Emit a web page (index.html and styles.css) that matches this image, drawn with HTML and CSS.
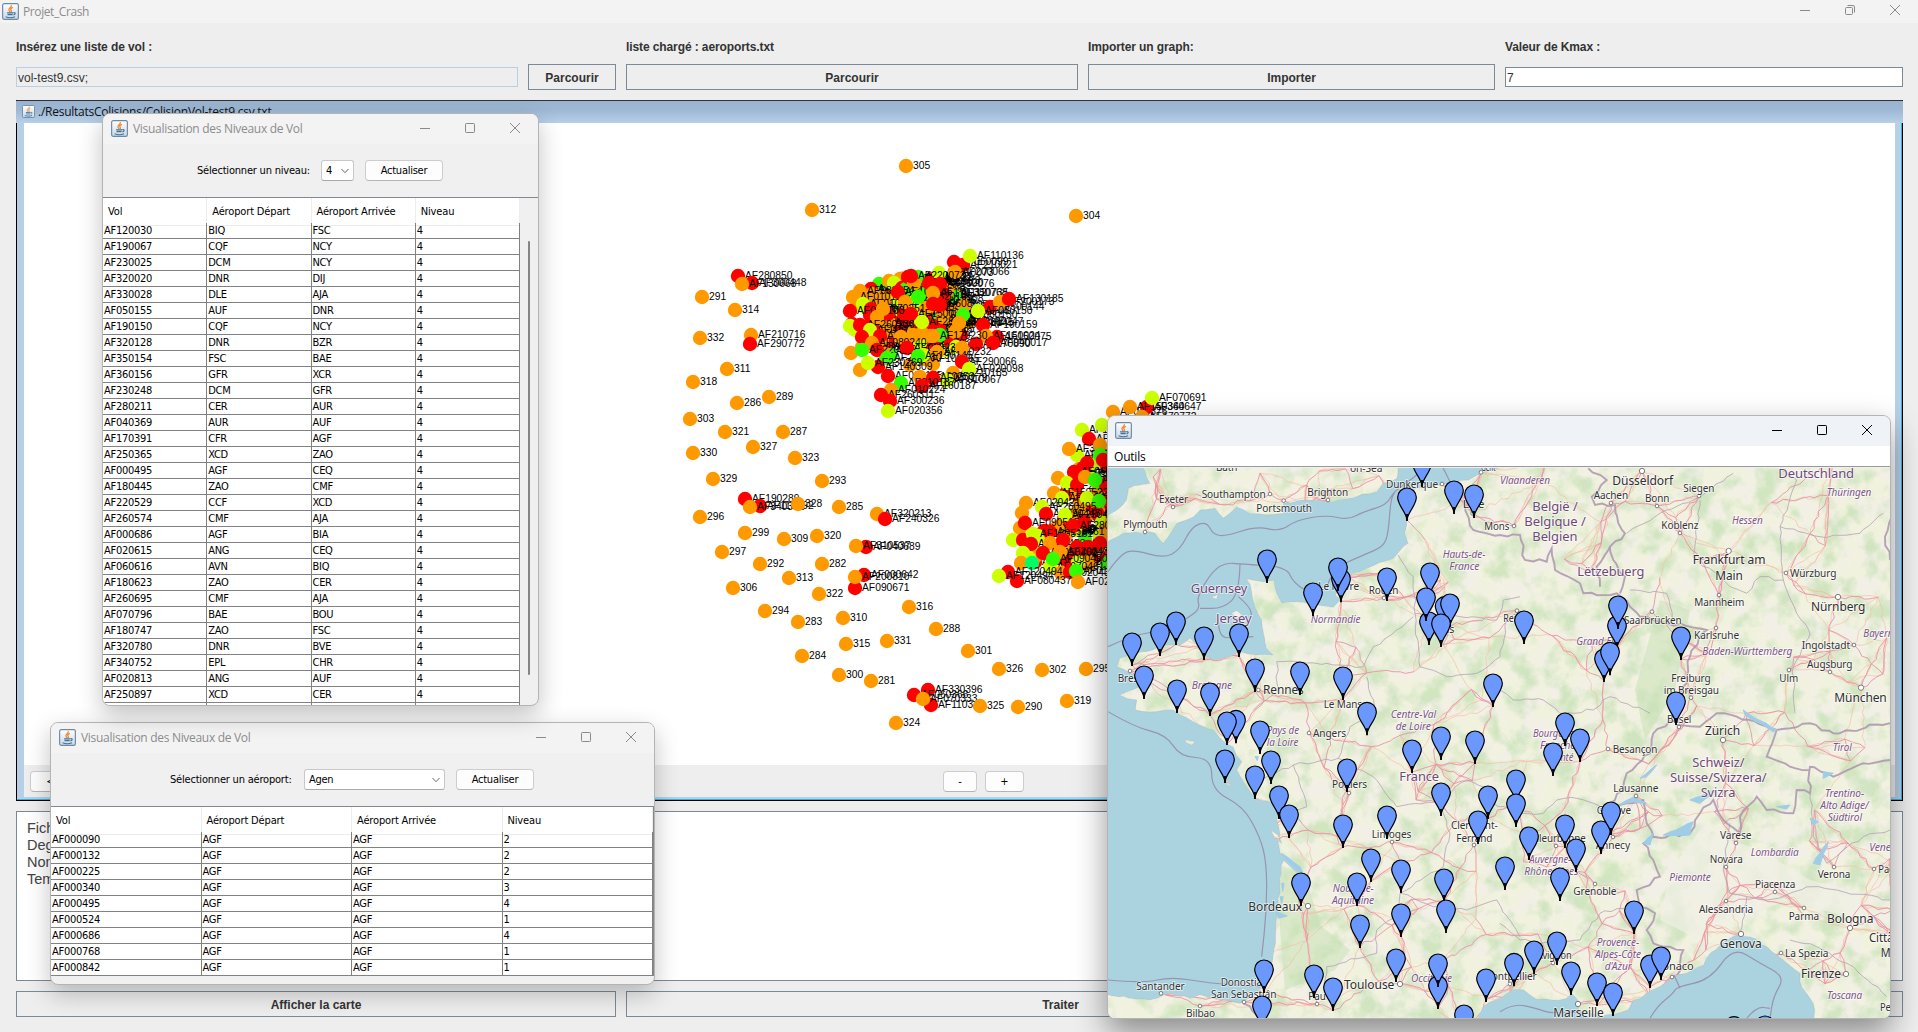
FILE: index.html
```html
<!DOCTYPE html>
<html lang="fr">
<head>
<meta charset="utf-8">
<title>Projet_Crash</title>
<link rel="stylesheet" href="styles.css">
</head>
<body>
<svg class="defs" width="0" height="0" aria-hidden="true">
  <defs>
    <linearGradient id="tile" x1="0" y1="0" x2="0" y2="1"><stop offset="0" stop-color="#fff"/><stop offset="1" stop-color="#c9d8e6"/></linearGradient>
    <symbol id="java" viewBox="0 0 16 16">
      <rect x=".6" y=".6" width="14.8" height="14.8" rx="1.5" fill="url(#tile)" stroke="#6d8aa3" stroke-width="1.1"/>
      <path d="M8.8 2C9.4 4.200 5.800 4.700 6.600 6.700 6.900 7.500 7.500 8 7.500 8.600M10.300 4.200C8.300 5 7.600 5.800 8.700 7 9.100 7.600 8.900 8.100 8.500 8.500" fill="none" stroke="#ee8a2e" stroke-width="1.200"/>
      <path d="M4.800 9.300H10.500M5.200 11H10M3.400 13C6 14 10 13.900 12.300 12.900M10.800 9C13 8.800 12.800 10.600 10.800 11.200" fill="none" stroke="#42719c" stroke-width="1.100"/>
    </symbol>
    <symbol id="min" viewBox="0 0 12 12"><path d="M1 6.500H11" fill="none" stroke="currentColor"/></symbol>
    <symbol id="max" viewBox="0 0 12 12"><rect x="1.500" y="1.500" width="9" height="9" rx=".8" fill="none" stroke="currentColor"/></symbol>
    <symbol id="restore" viewBox="0 0 12 12"><path d="M3.500 1.500H9A1.500 1.500 0 0 1 10.500 3V8.500" fill="none" stroke="currentColor"/><rect x="1.500" y="3.500" width="7" height="7" rx="1" fill="none" stroke="currentColor"/></symbol>
    <symbol id="close" viewBox="0 0 12 12"><path d="M1 1L11 11M11 1L1 11" fill="none" stroke="currentColor"/></symbol>
    <symbol id="chev" viewBox="0 0 10 8"><path d="M1.500 2L5 5.700 8.500 2" fill="none" stroke="#666"/></symbol>
  </defs>
</svg>

<div class="app">
  <header class="app-title">
    <svg class="java"><use href="#java"/></svg><span class="caption">Projet_Crash</span>
    <span class="controls"><svg><use href="#min"/></svg><svg><use href="#restore"/></svg><svg><use href="#close"/></svg></span>
  </header>
  <main class="content">
    <div class="form">
      <label class="wide">Insérez une liste de vol :</label>
      <label>liste chargé : aeroports.txt</label>
      <label>Importer un graph:</label>
      <label>Valeur de Kmax :</label>
      <div class="field readonly">vol-test9.csv;</div>
      <button class="metal">Parcourir</button>
      <button class="metal">Parcourir</button>
      <button class="metal">Importer</button>
      <div class="field">7</div>
    </div>
    <section class="frame">
      <div class="frame-title"><svg class="java"><use href="#java"/></svg>./ResultatsColisions/ColisionVol-test9.csv.txt</div>
      <div class="frame-body">
        <svg class="graph" id="graph" viewBox="24 123 1871 642"></svg>
        <div class="toolbar">
          <button class="win-btn nav">&lt;</button>
          <span class="zoom"><button class="win-btn minus">-</button><button class="win-btn plus">+</button></span>
        </div>
      </div>
    </section>
    <section class="log">
      <p>Fichier</p><p>Degre</p><p>Nombre</p><p>Temps</p>
    </section>
    <div class="actions">
      <button class="metal">Afficher la carte</button>
      <button class="metal">Traiter</button>
      <button class="metal"></button>
    </div>
  </main>
</div>

<div class="window airport">
  <header class="titlebar"><svg class="java"><use href="#java"/></svg><span class="caption">Visualisation des Niveaux de Vol</span>
    <span class="controls"><svg><use href="#min"/></svg><svg><use href="#max"/></svg><svg><use href="#close"/></svg></span></header>
  <div class="picker"><span>Sélectionner un aéroport:</span><div class="select">Agen<svg><use href="#chev"/></svg></div><button class="win-btn">Actualiser</button></div>
  <div class="table" id="airports"></div>
</div>

<div class="window level">
  <header class="titlebar"><svg class="java"><use href="#java"/></svg><span class="caption">Visualisation des Niveaux de Vol</span>
    <span class="controls"><svg><use href="#min"/></svg><svg><use href="#max"/></svg><svg><use href="#close"/></svg></span></header>
  <div class="picker"><span>Sélectionner un niveau:</span><div class="select">4<svg><use href="#chev"/></svg></div><button class="win-btn">Actualiser</button></div>
  <div class="scroll"><div class="table" id="levels"></div><div class="track"><div class="thumb"></div></div></div>
</div>

<div class="window map-window">
  <header class="titlebar"><svg class="java"><use href="#java"/></svg>
    <span class="controls"><svg><use href="#min"/></svg><svg><use href="#max"/></svg><svg><use href="#close"/></svg></span></header>
  <nav class="menu">Outils</nav>
  <svg class="map" id="map" viewBox="1108 468 782 550"></svg>
</div>
<script src="app.js"></script>
</body>
</html>
```
FILE: styles.css
```css
* { box-sizing: border-box; }
body { margin: 0; width: 1918px; height: 1032px; overflow: hidden; position: relative; font-family: "Liberation Sans", Arial, sans-serif; background: #eee; }
button { font: inherit; color: inherit; padding: 0; margin: 0; }
.defs { position: absolute; }
.java { width: 17px; height: 17px; flex: none; }
.caption { font: 12px "Open Sans", "Noto Sans", sans-serif; letter-spacing: -.3px; color: #8c8c8c; white-space: nowrap; }
.controls { margin-left: auto; display: flex; gap: 33px; color: #8a8a8a; }
.controls svg { width: 12px; height: 12px; display: block; }

.app { height: 1032px; display: flex; flex-direction: column; }
.app-title { height: 23px; background: #f3f3f3; display: flex; align-items: center; gap: 4px; padding: 0 17px 0 2px; }
.app-title .caption { letter-spacing: -.4px; }
.app-title .controls { margin-top: -3px; }
.content { flex: 1; padding: 0 15px 0 16px; display: flex; flex-direction: column; }
.form { display: grid; grid-template-columns: 502px 88px 452px 407px 398px; column-gap: 10px; grid-template-rows: 41px 26px; align-items: center; font-size: 12px; font-weight: bold; color: #333; margin-bottom: 10px; }
.form label { padding-bottom: 1px; margin-top: 7px; letter-spacing: -.1px; }
.form .wide { grid-column: span 2; }
.field { height: 20px; background: #fff; border: 1px solid #7a8a99; font-weight: normal; line-height: 20px; padding-left: 1px; color: #333; }
.readonly { background: #eee; border-color: #b8cfe5; }
.metal { border: 1px solid #7a8a99; background: #eee; font-size: 12px; font-weight: bold; color: #333; height: 26px; padding-top: 1px; }

.frame { height: 701px; border: solid #000; border-width: 1px; border-top-color: #333; display: flex; flex-direction: column; }
.frame-title { height: 22px; margin: 0 -1px; background: linear-gradient(#99b3d0, #9db8d4 40%, #b8cfe8); font: 12px "Open Sans", "Noto Sans", sans-serif; letter-spacing: -.25px; display: flex; align-items: center; gap: 3px; padding: 0 0 2px 6px; color: #111; }
.frame-title .java { width: 13px; height: 13px; }
.frame-body { flex: 1; border: solid #b8cfe8; border-width: 0 6px 2px 7px; box-shadow: 0 0 0 1px #2cb5df; clip-path: inset(0 -1px -1px 0); background: #fff; display: flex; flex-direction: column; margin: 0 1px 1px 0; }
.graph { width: 1871px; height: 642px; display: block; }
.toolbar { flex: 1; background: #eee; display: flex; align-items: center; padding-left: 6px; font: 11px "DejaVu Sans Condensed", "DejaVu Sans", sans-serif; }
.nav { width: 41px; }
.zoom { margin-left: 872px; display: flex; gap: 8px; }
.minus { width: 34px; } .plus { width: 39px; }
.log { height: 170px; margin-top: 10px; border: 1px solid #7a8a99; background: #fff; padding: 8px 10px; font-size: 14.500px; line-height: 17px; color: #444; }
.log p { margin: 0; }
.actions { display: grid; grid-template-columns: 600px 869px 398px; gap: 10px; margin-top: 10px; }

.window { position: absolute; border: 1px solid #b4b4b4; border-radius: 8px; background: #f0f0f0; overflow: hidden; display: flex; flex-direction: column; font: 11px "DejaVu Sans Condensed", "DejaVu Sans", sans-serif; letter-spacing: -.28px; color: #000; box-shadow: 0 9px 24px rgba(0,0,0,.24); }
.titlebar { height: 30px; flex: none; background: #f3f3f3; display: flex; align-items: center; padding: 0 17px 2px 8px; gap: 5px; }
.level { left: 102px; top: 113px; width: 437px; height: 593px; }
.airport { left: 50px; top: 722px; width: 605px; height: 263px; }
.map-window { left: 1107px; top: 415px; width: 784px; height: 604px; box-shadow: 0 14px 32px rgba(0,0,0,.42); }
.map-window .titlebar { background: #eff3f7; padding-left: 7px; }
.map-window .controls { color: #000; }
.picker { height: 53px; flex: none; display: flex; align-items: center; }
.level .picker { padding-left: 94px; }
.airport .picker { padding-left: 119px; }
.picker span { width: 124px; letter-spacing: -.2px; }
.airport .picker span { width: 134px; }
.select { width: 33px; height: 21px; border: 1px solid #c8c8c8; border-bottom-color: #aaa; border-radius: 3px; background: #fff; display: flex; align-items: center; justify-content: space-between; padding: 0 3px 0 4px; }
.airport .select { width: 141px; }
.select svg { width: 10px; height: 8px; }
.win-btn { height: 21px; border: 1px solid #cdcdcd; border-bottom-color: #b5b5b5; border-radius: 4px; background: #fdfdfd; }
.picker .win-btn { width: 78px; margin-left: 11px; letter-spacing: -.25px; padding-bottom: 1px; }
.scroll { display: flex; flex: 1; border-top: 1px solid #828790; }
.level .table { width: 417px; }
.table { flex: none; }
.airport .table { border-top: 1px solid #828790; border-right: 1px solid #828790; }
.row { display: grid; grid-template-columns: repeat(4, 1fr); height: 16px; background: #fff; line-height: 15px; white-space: nowrap; }
.row span { border-right: 1px solid #828282; border-bottom: 1px solid #828282; padding-left: 1px; }
.head { height: 25px; line-height: 27px; }
.head span { border-color: #ececec; padding-left: 5px; letter-spacing: -.15px; }
.track { flex: 1; padding: 43px 0 0 8px; }
.thumb { width: 2px; height: 434px; background: #858585; border-radius: 1px; }
.menu { height: 21px; flex: none; background: #fff; border-bottom: 1px solid #999; font: 12px/22px "Open Sans", "Noto Sans", sans-serif; padding-left: 6px; margin-bottom: 1px; letter-spacing: -.2px; }
.map { width: 782px; height: 550px; display: block; flex: none; }

.node-label { font: 10.300px "Liberation Sans", Arial, sans-serif; fill: #000; }
.place { font-family: "Noto Sans", sans-serif; paint-order: stroke; stroke: rgba(255,255,255,.7); stroke-width: 5px; }
.city { font-size: 31px; fill: #333; }
.big { font-size: 37px; fill: #2e2e2e; }
.country { font-size: 38px; fill: #6f4877; }
.region { font-size: 31px; fill: #7d5589; font-style: italic; }
```
FILE: app.js
```js
// ---- tables ----
function fill(id, rows) {
  const head = ['Vol', 'Aéroport Départ', 'Aéroport Arrivée', 'Niveau'];
  const line = (r, c) => '<div class="row ' + c + '">' + r.map(v => '<span>' + v + '</span>').join('') + '</div>';
  document.getElementById(id).innerHTML = line(head, 'head') + rows.map(r => line(r, '')).join('');
}
fill('levels', ('120030 BIQ FSC,190067 CQF NCY,230025 DCM NCY,320020 DNR DIJ,330028 DLE AJA,050155 AUF DNR,190150 CQF NCY,320128 DNR BZR,350154 FSC BAE,360156 GFR XCR,230248 DCM GFR,280211 CER AUR,040369 AUR AUF,170391 CFR AGF,250365 XCD ZAO,000495 AGF CEQ,180445 ZAO CMF,220529 CCF XCD,260574 CMF AJA,000686 AGF BIA,020615 ANG CEQ,060616 AVN BIQ,180623 ZAO CER,260695 CMF AJA,070796 BAE BOU,180747 ZAO FSC,320780 DNR BVE,340752 EPL CHR,020813 ANG AUF,250897 XCD CER').split(',').map(s => ['AF' + s.split(' ')[0], s.split(' ')[1], s.split(' ')[2], '4']).concat([['', '', '', '']]));
fill('airports', [['000090', 2], ['000132', 2], ['000225', 2], ['000340', 3], ['000495', 4], ['000524', 1], ['000686', 4], ['000768', 1], ['000842', 1]].map(r => ['AF' + r[0], 'AGF', 'AGF', r[1]]));

let seed = 7;
const rnd = () => (seed = (seed * 16807) % 2147483647) / 2147483647;

// ---- collision graph ----
const hue = { O: '#ff9900', R: '#ff0000', Y: '#ccff00', G: '#33ff00', T: '#00ff66' };
let g = '';
function node(x, y, c, label) {
  x = Math.round(x); y = Math.round(y);
  if (c) g += `<circle cx="${x}" cy="${y}" r="7.200" fill="${hue[c]}"/>`;
  if (label) g += `<text class="node-label" x="${x + 7}" y="${y + 3}">${label}</text>`;
}
function nodes(ox, oy, s) {
  s.trim().split(/\s+/).forEach(t => { const [c, x, y, l] = t.split(','); node(ox + x / 3, oy + y / 3, c, l && (l.length > 3 ? 'AF' + l : l)); });
}
const num = () => 'AF' + String(Math.floor(rnd() * 360)).padStart(3, '0').slice(0, 2) + '0' + Math.floor(100 + rnd() * 700);
const mix = 'ORRYOGRO';
for (let i = 0; i < 150; i++) {
  const a = rnd() * 6.28, d = Math.sqrt(rnd()), x = 910 + Math.cos(a) * d * 62, t = num();
  node(x, 322 + Math.sin(a) * d * 46, i % 16 === 3 ? 'Y' : mix[i % 8], (x < 925 || i % 4 === 0) && i < 110 ? t : '');
}
nodes(830, 240, `R,372,65,060099 R,400,75,210021 Y,420,47,110136 Y,327,100,010073 O,376,95,200066 O,252,130 R,242,107,220073 O,90,152,080354 O,70,170,010166
 Y,100,192,010244 R,204,157,100285 O,225,185 G,264,172,320148 R,296,130,060120 R,330,132,160076 O,308,160,170112 R,123,208,070251 R,60,213,090103 O,160,207
 R,242,221,150036 O,140,232 Y,60,258 R,90,255,260236 Y,120,270,070244 R,95,290 R,150,287,110274 O,212,290 O,250,285 O,276,280 Y,276,246,280189 R,310,193 R,330,195
 R,480,200,500144 O,510,185,200173 R,538,177,130185 G,400,225,060130 Y,443,214,080150 O,386,250,030145 R,460,255,190159 R,500,290,150075 O,467,287,150024 R,437,313,170890 R,490,309,040017
 O,310,287,170230 O,126,310,080240 R,140,330 O,64,340 G,95,331,220249 R,232,325,080230 O,322,335,090232 O,395,325 G,170,355,220030 Y,280,345 G,265,347,190145
 O,90,390 R,145,382,140309 Y,113,369,230269 R,396,367,290066 O,370,400,210185 Y,416,388,020098 R,175,408,020175 O,270,410,180253 Y,350,420,010067 R,310,415,080179 G,212,429,010187 R,275,437,160187 O,182,450,010224 R,154,465,260311 R,180,483,300236 Y,173,513,020356`);
nodes(640, 130, `O,799,109,305 O,516,239,312 O,1307,257,304 R,295,437,280850 R,337,460,300448 O,307,463,130668 O,186,501,291 O,285,541,314 O,180,625,332 O,333,614,210716 R,330,643,290772 O,262,717,311 O,160,757,318 O,386,802,289 O,290,819,286 O,149,868,303 O,254,907,321 O,428,905,287 O,340,951,327 O,160,969,330 O,464,983,323`);
nodes(640, 430, `O,218,146,329 O,547,152,293 R,315,207,190289 R,360,228,110592 O,331,232,340332 O,473,223,328 O,598,232,285 O,710,252,320213 R,734,268,240326 O,179,262,296 O,316,310,299 O,433,327,309 O,531,319,320 R,677,352,040689 O,649,347,310537 O,247,367,297 O,361,403,292 O,547,403,282 R,673,436,000642 R,646,473,090671 O,645,442,200810 O,448,443,313 O,280,474,306 O,538,493,322 O,376,544,294 O,473,577,283 O,610,563,310 O,807,530,316 O,887,596,288 O,618,641,315 O,741,632,331 O,487,679,284 O,985,663,301 O,598,736,300 O,693,753,281 O,1077,718,326 O,1205,720,302 O,1339,718,295 R,864,780,330396 R,822,796,060366 R,874,826,110345 O,850,807,070333 O,1019,829,325 O,1135,831,290 O,1281,813,319 O,769,878,324`);
for (let i = 0; i < 120; i++) {
  const y = 455 + rnd() * 112, l = Math.max(1022, 1076 - (y - 455) * .6), t = num();
  node(l + 10 + rnd() * 90, y, mix[i % 8], i < 70 ? t : '');
}
nodes(1000, 380, `Y,245,151,100480 O,340,96,040876 R,440,82,360647 O,390,82,150344 O,425,112,170772 Y,456,55,070691 Y,305,135 R,266,177,050477 Y,232,225,170458 O,207,208,350491 R,260,248 O,300,195 G,300,225 R,310,240
 R,222,275,060487 O,175,293 Y,200,310 R,230,315 O,255,290,160460 G,286,300,180472 O,162,340,150522 Y,185,355,220440 Y,260,355 G,296,364 O,78,368,020421 O,66,400 Y,125,380,260495 R,138,402,090445 Y,195,405,250411
 O,60,445 R,75,430,090515 R,150,455,150461 R,220,437,280460 Y,38,479 R,70,480 Y,98,461,180516 R,92,492,040453 O,150,490 R,190,480 R,230,500,050493 R,265,500 R,300,490 Y,70,520 R,130,520,050461 Y,88,535 O,180,515,200432
 O,62,550 T,97,550 Y,150,560,070461 G,158,538,090490 O,182,580,020431 R,210,575 G,228,573,010439 R,25,576,120494 R,52,602,080437 Y,-3,589,120494 O,235,605,020451`);
document.getElementById('graph').innerHTML = g;

// ---- map ---- (each sheet is drawn at three times its screen size)
const sheets = { A: [1100, 400], D: [1500, 400], B: [1100, 710], C: [1500, 710] };
const P = (k, x, y) => [sheets[k][0] + x / 3, sheets[k][1] + y / 3];
const pts = (k, s) => s.split(' ').map(p => P(k, ...p.split(',').map(Number)));
function rough(list, amp, closed) {
  const out = [];
  list.forEach((p, i) => {
    out.push(p);
    const q = list[i + 1] || (closed && list[0]);
    if (!q) return;
    const len = Math.hypot(q[0] - p[0], q[1] - p[1]), n = Math.floor(len / 6);
    if (len > 300) return;
    for (let j = 1; j < n; j++) out.push([p[0] + (q[0] - p[0]) * j / n + (rnd() - .5) * amp, p[1] + (q[1] - p[1]) * j / n + (rnd() - .5) * amp]);
  });
  return 'M' + out.map(p => p.map(v => v.toFixed(1)).join(' ')).join('L') + (closed ? 'Z' : '');
}
function curve(k, s) {
  const p = pts(k, s); let d = 'M' + p[0];
  for (let i = 1; i < p.length - 1; i++) d += `Q${p[i]} ${(p[i][0] + p[i + 1][0]) / 2},${(p[i][1] + p[i + 1][1]) / 2}`;
  return d + 'L' + p[p.length - 1];
}
const coast = [
  ...pts('A', '1215,195 1105,240 1030,255 950,265 895,275 915,300 920,350 915,400 925,430 910,440 880,475 800,505 760,520 730,545 705,585 722,600 700,622 650,615 590,605 545,610 530,580 522,540 490,545 440,537 455,575 465,620 485,660 490,700 500,745 520,765 470,765 420,755 390,770 340,780 320,770 290,735 270,715 240,735 180,740 100,765 60,775 50,800 90,820 130,835 140,855 60,885 110,900 105,930 170,935 220,930'),
  ...pts('B', '240,15 300,45 340,60 360,85 400,110 425,155 410,180 430,215 465,265 520,280 545,300 530,330 540,370 535,400 540,430 600,480 615,500 580,480 550,450 540,530 530,620 520,740 500,820 460,860 420,880 370,870 300,855 270,865 210,850 150,870 90,865 15,850 15,940 1130,940 1150,890 1200,865 1240,840'),
  ...pts('C', '30,838 70,840 110,868 160,870 200,865 215,850 240,880 235,900 250,905 300,920 345,912 385,900 400,870 440,850 480,830 530,795 560,790 610,765 630,730 680,690 710,675 750,680 800,710 850,750 900,790 905,830 940,880 945,940 1180,940'),
  [1900, 460]
];
const land = rough(coast, 2.4, true)
  + rough(pts('A', '125,195 150,250 85,265 80,300 15,355 15,430 70,400 110,395 165,400 190,430 215,395 230,370 280,350 300,330 345,325 370,355 410,320 450,340 500,345 550,340 550,310 620,300 700,305 770,290 830,275 850,250 890,235 895,195'), 2.4, true)
  + rough(pts('A', '395,640 410,632 425,645 410,655'), 1, true) + rough(pts('A', '335,592 355,582 350,598'), 1, true)
  + rough(pts('B', '255,90 285,95 275,105 260,100'), 1, true) + rough(pts('B', '512,360 535,375 545,400 525,385'), 1, true)+ rough(pts('B', '370,215 385,215 390,228'), 1, true);

const labels = {
A: `city|Bath|348|412|203;city|Exeter|177|264|298;city|Southampton|305|497|283;city|Portsmouth|469|636|327;city|Brighton|622|744|278;city|on-Sea|750|847|206;city|Plymouth|70|202|375;city|Dunkerque|858|1014|255;city|Lille|1088|1153|313;city|Mons|1153|1228|379;region|Hauts-de-|1028|1156|465;region|France|1048|1138|499;country|Guernsey|272|442|567;country|Jersey|348|455|657;region|Normandie|632|781|659;city|Le Havre|655|777|561;city|Rouen|806|895|572;city|Paris|990|1063|688;big|Rennes|489|611|870;city|Brest|53|125|835;region|Bretagne|275|396|858;city|Le Mans|671|786|913;region|Centre-Val|872|1008|944;city|Gent|1143|1187|202`,
D: `region|Vlaanderen|0|150|241;big|Düsseldorf|337|519|242;city|Siegen|550|643|266;country|Deutschland|835|1062|222;region|Thüringen|980|1114|277;city|Aachen|281|384|288;city|Bonn|435|508|297;country|België /|97|233|321;country|Belgique /|73|257|366;country|Belgien|97|232|410;city|Koblenz|484|595|378;region|Hessen|696|788|361;big|Frankfurt am|578|796|480;big|Main|646|728|527;city|Würzburg|870|1009|521;country|Lëtzebuerg|232|433|517;city|Mannheim|583|733|607;big|Nürnberg|933|1096|622;city|Reims|10|85|656;city|Saarbrücken|372|545|662;city|Karlsruhe|582|717|708;region|Grand Est|229|356|726;region|Baden-Württemberg|607|877|755;region|Bayern|1090|1180|700;city|Ingolstadt|905|1050|737;city|Augsburg|921|1057|795;city|Ulm|838|894|835;city|Freiburg|514|632|835;city|im Breisgau|491|657|871;big|München|1003|1160|894`,
B: `region|Pays de|500|597|61;region|la Loire|500|595|97;city|Angers|639|738|70;region|de Loire|887|992|50;city|Poitiers|696|801|225;country|France|898|1017|201;city|Limoges|815|934|373;city|Clermont-|1053|1193|348;city|Ferrand|1069|1177|385;big|Bordeaux|445|606|590;region|Nouvelle-|698|821|536;region|Aquitaine|696|822|572;city|Santander|109|254|829;city|Donostia-|362|495|818;city|San Sebastián|333|529|855;city|Bilbao|258|345|912;city|Pau|625|677|859;big|Toulouse|732|883|824;region|Occitanie|933|1056|806`,
C: `city|Basel|501|574|30;big|Zürich|615|720|62;region|Bourgogne-|99|245|72;region|Franche-|120|235|107;region|Comté|140|220|143;city|Besançon|338|472|118;region|Tirol|998|1055|113;country|Schweiz/|577|733|158;country|Suisse/Svizzera/|510|800|203;country|Svizra|602|706|249;city|Lausanne|340|475|237;city|Genève|290|393|301;region|Trentino-|975|1092|251;region|Alto Adige/|961|1106|287;region|Südtirol|983|1086|322;city|Varese|660|754|376;city|Villeurbanne|85|257|385;city|Annecy|287|390|408;region|Veneto|1108|1200|413;region|Lombardia|752|896|429;city|Novara|629|728|448;region|Auvergne-|88|213|448;region|Rhône-Alpes|73|235|485;city|Verona|953|1051|495;city|Padova|1135|1230|480;region|Piemonte|508|632|504;city|Piacenza|765|886|525;city|Grenoble|220|349|546;city|Alessandria|597|759|599;city|Parma|866|957|619;big|Bologna|981|1120|628;big|Città|1107|1180|684;big|Marino|1142|1250|730;big|Genova|659|785|702;region|Provence-|290|417|697;region|Alpes-Côte|285|423|733;region|d'Azur|314|395|769;city|Avignon|110|215|736;city|La Spezia|855|985|730;city|Monaco|457|581|770;big|Firenze|903|1023|793;city|Montpellier|-52|110|801;region|Toscana|981|1086|857;big|Marseille|160|311|910;city|Perugia|1140|1240|893` };
const dots = {
A: '219,321 510,282 551,302 684,300 135,396 1026,252 1242,378 1118,340 852,594 475,870 90,813 1143,217',
D: '426,213,1 597,288 333,309 471,318 540,399 686,453,1 657,585 858,519 1014,591,1 51,632 456,635 648,684 1062,735 990,816 867,810 1083,863,1 573,893',
B: '627,69 747,249 876,396 1122,405 624,588,1 183,850 432,876 300,888 651,882 900,822,1 1230,822',
C: '537,51 669,90,1 324,117 408,258 339,381 168,408 708,399 678,471 1002,471 1122,477 285,522 825,546 678,573 912,594 1050,654,1 723,672,1 843,729 1038,792,1 159,759 516,801 234,882,1' };
const pins = {
A: '966,190 921,292 1062,271 1122,283 501,478 723,536 714,502 861,532 639,577 990,517 1034,618 1050,610 987,664 978,592 1023,670 228,664 180,697 96,727 312,709 417,700 132,826 465,805 600,814 729,829 231,868 330,877 801,935 1179,850',
D: '72,661 351,676 354,616 312,775 330,755 543,709 528,904',
B: '408,29 381,34 480,61 375,148 513,151 465,196 537,256 567,313 741,175 936,118 1023,79 1125,91 1023,247 1164,256 1134,331 1248,208 1248,280 729,343 861,316 813,445 903,478 771,517 603,517 1032,505 1038,598 903,610 1215,469 780,643 888,745 1014,826 1014,760 492,778 642,793 699,832 486,886 1092,913 1158,805 1242,758',
C: '195,37 240,85 159,127 195,343 87,379 228,415 303,361 333,304 180,502 402,601 171,694 102,721 213,784 291,817 339,847 450,763 483,739 702,948 795,946' };

// road network: every town is joined to its nearest neighbours
const towns = [];
for (const k in dots) dots[k].split(' ').forEach(s => { const [x, y] = s.split(',').map(Number); towns.push(P(k, x, y)); });
for (const k in pins) pins[k].split(' ').forEach((s, i) => { if (i % 2) { const [x, y] = s.split(',').map(Number); towns.push(P(k, x, y + 68)); } });
for (let i = 0; i < 130; i++) towns.push([1400 + rnd() * 500, 460 + rnd() * 560]);
for (let i = 0; i < 40; i++) towns.push([1250 + rnd() * 200, 560 + rnd() * 450]);
for (let i = 0; i < 20; i++) towns.push([1110 + rnd() * 290, 468 + rnd() * 40]);
function roads(n, from) {
  let d = '';
  towns.forEach((a, i) => towns.map((b, j) => [Math.hypot(a[0] - b[0], a[1] - b[1]), b, j]).filter(e => e[0] > 9).sort((p, q) => p[0] - q[0]).slice(from, n).forEach(e => { if (e[2] > i || from) d += rough([a, e[1]], 4); }));
  return d;
}
const borders = rough(pts('D', '-110,300 -80,390 -40,400 0,405 60,405 75,480 140,485 155,445 165,510 240,550 250,580 350,580 390,620 420,650 500,670 620,690 570,770 560,830 530,930'), 4)
  + rough(pts('D', '265,205 320,240 275,290 285,315 345,315 355,370 375,400 330,440 340,480 375,530 360,580'), 4)
  + rough(pts('D', '330,440 290,500 300,560'), 3)
  + rough(pts('C', '530,30 460,70 450,130 380,190 370,240 330,280 300,300 380,280 430,270 440,340 460,380 430,400 460,450 480,500 410,540 420,590 465,610 440,660 460,700 550,720 530,800'), 4)
  + rough(pts('C', '460,380 570,370 600,310 640,270 670,330 720,370 720,320 770,260 800,300 880,310 890,240 930,250 930,170 1000,200 1090,160 1170,150'), 4)
  + rough(pts('C', '530,45 600,50 650,10 710,20 800,50 830,60 930,40 1000,70 1170,40'), 4)
  + rough(pts('C', '830,60 800,140 870,170 930,180'), 4)
  + rough(pts('D', '1170,480 1155,410 1175,350'), 3) + rough(pts('B', '430,880 490,925'), 3);
const admin = rough(pts('A', '895,465 940,530 945,640 1080,650 1190,660 1210,600 1260,590'), 3) + rough(pts('A', '940,650 890,690 820,740 790,800 680,790 530,785'), 3)
  + rough(pts('A', '945,640 960,800 1040,830 1130,820 1200,770 1220,660'), 3) + rough(pts('A', '530,785 535,870 460,930'), 3)
  + rough(pts('B', '470,210 580,165 715,145 750,50 830,10 800,-100'), 3) + rough(pts('B', '580,165 620,290 545,310'), 3) + rough(pts('B', '715,145 820,200 890,290 1020,270 1100,210 1190,240'), 3)
  + rough(pts('B', '1020,270 1050,370 1030,470 900,550 900,610 830,660 830,730 680,770 670,830'), 3) + rough(pts('B', '900,550 1000,590 1100,600 1190,570 1260,680'), 3)
  + rough(pts('C', '-60,270 60,310 130,310 170,270 230,265 320,290'), 3) + rough(pts('C', '0,640 60,690 160,700 240,690 300,610 410,590'), 3)
  + rough(pts('D', '0,870 40,900 130,900 180,940 280,930 330,890 450,940'), 3) + rough(pts('D', '390,570 500,580 520,680'), 3) + rough(pts('D', '380,400 480,340 600,290 700,220'), 3)
  + rough(pts('D', '600,300 580,470 690,560 740,580 780,530 850,540 840,380 960,410 1080,400 1150,340'), 3) + rough(pts('D', '850,540 890,640 930,700 880,800 885,940'), 3) + rough(pts('D', '840,380 890,240 840,205'), 3)
  + rough(pts('C', '690,340 670,480 690,550 740,560 800,570 940,530 1170,570'), 3) + rough(pts('C', '930,250 940,380 980,460 1090,380 1170,360'), 3) + rough(pts('C', '740,560 720,670'), 3) + rough(pts('C', '870,690 950,710 1060,770 1160,860'), 3);
const sea = curve('A', '24,515 60,465 100,448 190,475 240,450 275,380 320,365 340,405 380,408 470,378 540,395 590,360 680,345 745,360 790,335 860,315 880,275 955,225 1010,150') + curve('A', '680,570 690,510 790,465 850,440 865,400 872,300 885,275') + curve('A', '1025,195 1050,245')
  + curve('A', '24,740 100,705 200,690 270,650 300,625 290,590 340,510 380,488 420,492 560,500 580,550 650,590') + curve('A', '420,492 418,580 370,625 300,625') + curve('A', '355,655 355,710 400,715 460,710') + curve('A','415,590 450,620 455,650')
  + curve('B', '24,5 100,50 200,75 240,140 335,145 335,240 430,290 480,380 500,460 500,600 485,740') + curve('B', '24,810 130,820 215,800 330,820 480,830')
  + curve('C', '0,905 40,880 110,895 150,910 250,905') + curve('C', '450,925 470,890 520,850 530,830 630,810 700,710 780,760 855,800 820,860 810,925') + curve('C', '740,925 770,890 810,895') + curve('C', '522,795 540,835');
const lakes = [['C', '340,290 400,262 440,280 400,275'], ['C', '420,205 470,165 440,200'], ['C', '730,0 830,60 820,65 735,15'], ['C', '940,460 985,395 960,465'], ['C', '570,270 650,240 600,280'], ['C', '970,185 1000,190 970,205'], ['C', '830,290 870,285 860,297'], ['C', '490,375 580,335 570,375'], ['C', '430,400 460,370 450,405'], ['C', '930,325 955,335 940,345'], ['B', '545,520 552,520 548,545'], ['B', '540,560 550,560 545,580'], ['B','530,605 562,618 535,625'], ['B', '545,430 600,470 615,510 600,490'], ['B', '465,140 475,140 472,152']];
const pin = (x, y) => `<g transform="translate(${x} ${y})"><path d="M0 66C-5 40-28 24-28 0A28 28 0 0 1 28 0C28 24 5 40 0 66Z" fill="#6a98ff" stroke="#000" stroke-width="3.500"/><path d="M0 50V71" stroke="#000" stroke-width="5.500"/></g>`;
let m = `<defs><clipPath id="land"><path d="${land}"/></clipPath>
<filter id="wood" x="0" y="0" width="1" height="1" color-interpolation-filters="sRGB"><feTurbulence type="fractalNoise" baseFrequency=".045" numOctaves="5" seed="9"/><feColorMatrix values="0 0 0 0 .74 0 0 0 0 .87 0 0 0 0 .68 3.500 0 0 0 -1.550"/></filter>
<filter id="field" x="0" y="0" width="1" height="1" color-interpolation-filters="sRGB"><feTurbulence type="fractalNoise" baseFrequency=".05" numOctaves="4" seed="3"/><feColorMatrix values="0 0 0 0 .95 0 0 0 0 .94 0 0 0 0 .90 0 4 0 0 -1.600"/></filter></defs>
<rect x="1108" y="468" width="782" height="551" fill="#aad3df"/><path d="${land}" fill="#f1f2de" stroke="#a7b5bd" stroke-width=".5"/>
<g clip-path="url(#land)"><rect x="1108" y="468" width="782" height="551" filter="url(#field)"/><rect x="1108" y="468" width="782" height="551" filter="url(#wood)" opacity=".62"/>
<g fill="#c5dfb3" opacity=".5"><path d="M1280 865l25 10 15 50 30 25-15 20-50 20-5-60z"/><path d="M1660 600l30 10-15 80-30 50-10-50z"/></g>
<g fill="#f1efe6" opacity=".7"><path d="M1670 870l30-40 60 20 50 30 80 20v30l-100-30-60 20-30 20-40-20z"/></g>
<path d="${roads(4, 2)}" fill="none" stroke="#f7b9a2" stroke-width=".6"/><path d="${roads(3, 0)}" fill="none" stroke="#e993a8" stroke-width=".9"/>
<path d="${admin}" fill="none" stroke="#b3a2b5" stroke-width=".8"/><path d="${borders}" fill="none" stroke="#ab94ae" stroke-width="1.900" opacity=".85"/></g>
<path d="${sea}" fill="none" stroke="#9a93b0" stroke-width="1.200"/>`;
lakes.forEach(l => m += `<path d="${rough(pts(...l), 1.5, true)}" fill="#9fcde8" stroke="#9fcde8"/>`);
for (const k in labels) {
  m += `<g transform="translate(${sheets[k]}) scale(.333333)">`;
  dots[k].split(' ').forEach(s => { const [x, y, b] = s.split(','); m += `<circle cx="${x}" cy="${y}" r="${b ? 8 : 5.5}" fill="#fff" stroke="#666" stroke-width="2.500"/>`; });
  labels[k].split(';').forEach(s => { const [c, t, a, b, y] = s.split('|'); m += `<text class="place ${c}" x="${a}" y="${+y + (c === 'big' || c === 'country' ? 12 : 10)}" textLength="${b - a}" lengthAdjust="spacingAndGlyphs">${t}</text>`; });
  m += '</g>';
}
for (const k in pins) m += `<g transform="translate(${sheets[k]}) scale(.333333)">` + pins[k].split(' ').map(s => pin(...s.split(','))).join('') + '</g>';
document.getElementById('map').innerHTML = m;
```
